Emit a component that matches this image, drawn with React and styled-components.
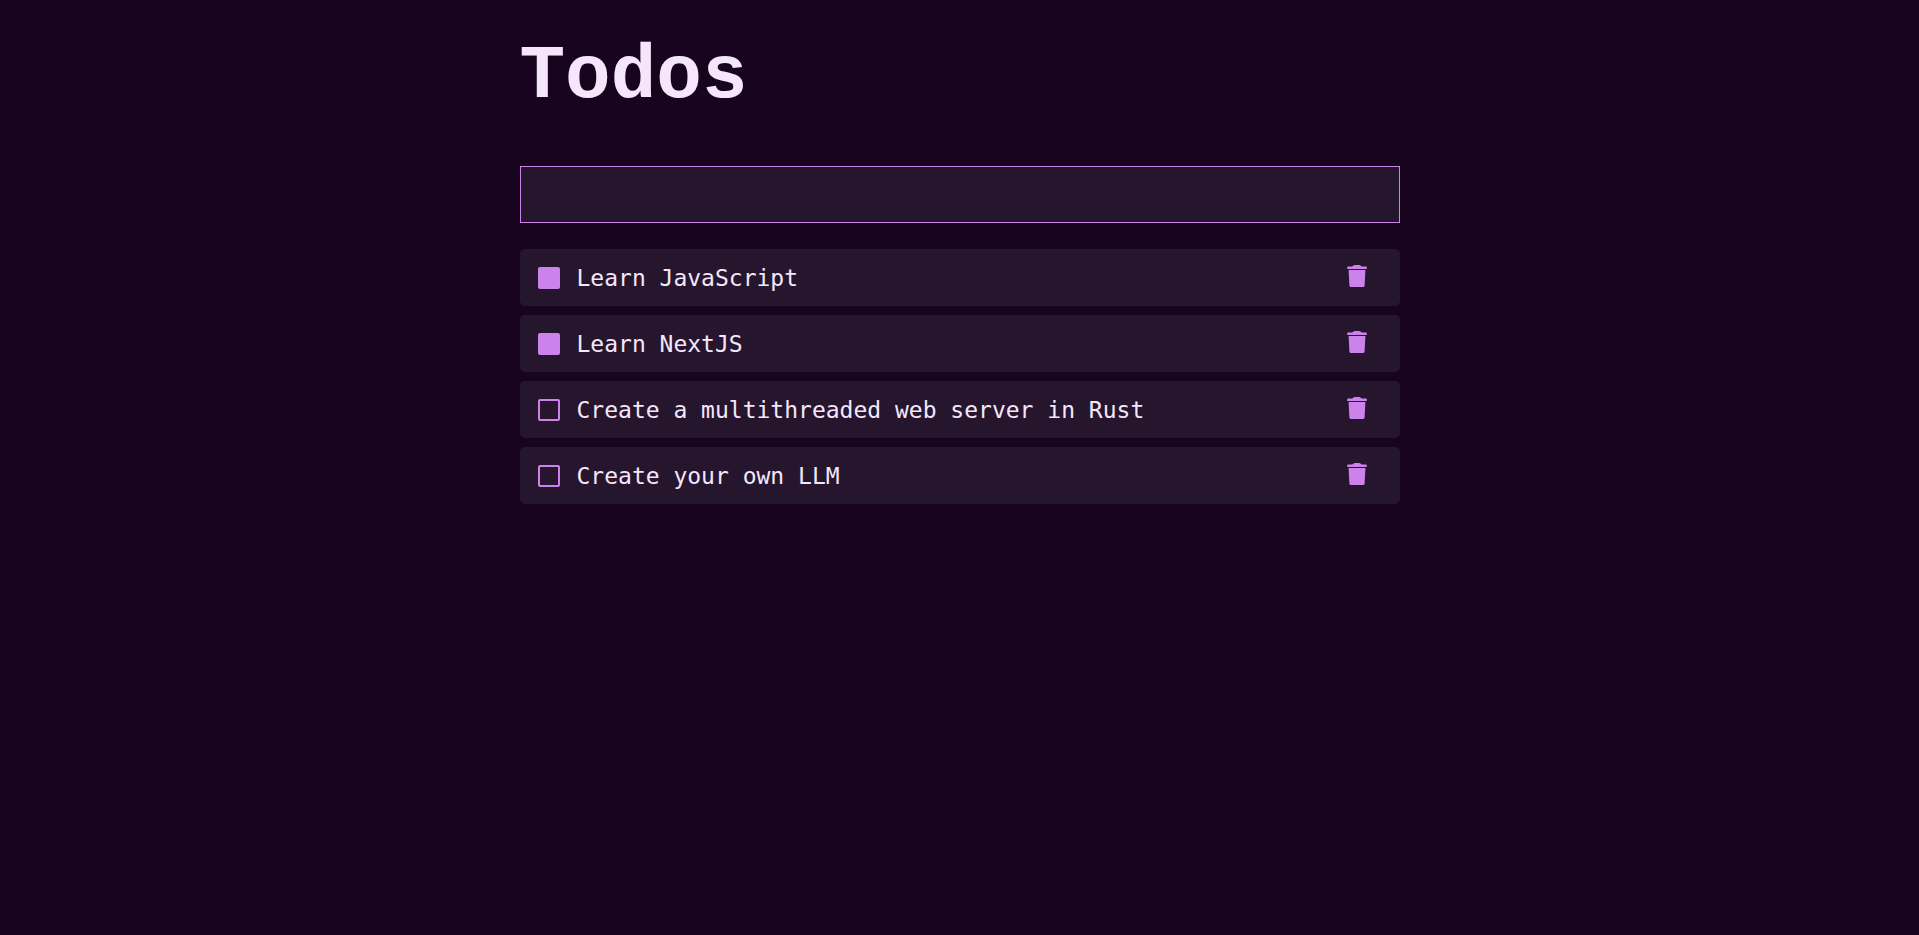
import { useState } from "react";
import styled, { createGlobalStyle } from "styled-components";

const GlobalStyle = createGlobalStyle`
  *, *::before, *::after { box-sizing: border-box; }
  body {
    margin: 0;
    background: #18041f;
    color: #f5e6fb;
    font-family: "DejaVu Sans Mono", monospace;
  }
`;

const Main = styled.main`
  width: 100%;
  max-width: 880px;
  margin: 0 auto;
  padding: 33px 0;
`;

const Title = styled.h1`
  margin: 0;
  font-family: "Liberation Mono", monospace;
  font-size: 76px;
  line-height: 88px;
  font-weight: 700;
`;

const NewTodo = styled.input`
  display: block;
  width: 100%;
  height: 57px;
  margin: 45px 0 26px;
  padding: 0 18px;
  border: 1px solid #cb83eb;
  border-radius: 0;
  outline: none;
  background: #26162d;
  color: inherit;
  font: inherit;
  font-size: 23px;
`;

const List = styled.ul`
  display: flex;
  flex-direction: column;
  gap: 9px;
  margin: 0;
  padding: 0;
  list-style: none;
`;

const Row = styled.li`
  display: flex;
  align-items: center;
  height: 57px;
  padding: 0 33px 0 18px;
  border-radius: 5px;
  background: #26162d;
`;

const Label = styled.label`
  display: flex;
  flex: 1;
  align-items: center;
  gap: 17px;
  font-size: 23px;
  line-height: 28px;
  cursor: pointer;
`;

const Check = styled.input`
  appearance: none;
  flex: none;
  width: 22px;
  height: 22px;
  margin: 0;
  border: 2px solid #cb83eb;
  border-radius: 2px;
  cursor: pointer;

  &:checked { background: #cb83eb; }
`;

const DeleteButton = styled.button`
  display: flex;
  padding: 0 0 4px;
  border: 0;
  background: none;
  color: #cb83eb;
  cursor: pointer;
`;

const TrashIcon = () => (
  <svg width="20" height="22" viewBox="0 0 20 22" fill="currentColor" aria-hidden="true">
    <path d="M5 1.500Q6.200 1.300 6.600.6 7 0 7.600 0h4.800q.6 0 1 .6.4.7 1.600.9h4q.8 0 .8.8v1.100q0 .6-.6.6H.8Q.2 4 .2 3.400V2.300q0-.8.8-.8Z" />
    <path d="M1.600 4.900h16.800l-.8 15.600Q17.500 22 16 22H4q-1.500 0-1.600-1.500Z" />
  </svg>
);

const initialTodos = [
  { id: 1, text: "Learn JavaScript", done: true },
  { id: 2, text: "Learn NextJS", done: true },
  { id: 3, text: "Create a multithreaded web server in Rust", done: false },
  { id: 4, text: "Create your own LLM", done: false },
];

export default function App() {
  const [todos, setTodos] = useState(initialTodos);
  const [draft, setDraft] = useState("");

  const toggle = (id) =>
    setTodos(todos.map((t) => (t.id === id ? { ...t, done: !t.done } : t)));
  const remove = (id) => setTodos(todos.filter((t) => t.id !== id));
  const add = (event) => {
    event.preventDefault();
    const text = draft.trim();
    if (!text) return;
    setTodos([...todos, { id: Date.now(), text, done: false }]);
    setDraft("");
  };

  return (
    <>
      <GlobalStyle />
      <Main>
        <Title>Todos</Title>
        <form onSubmit={add}>
          <NewTodo
            aria-label="New todo"
            value={draft}
            onChange={(event) => setDraft(event.target.value)}
          />
        </form>
        <List>
          {todos.map((todo) => (
            <Row key={todo.id}>
              <Label>
                <Check type="checkbox" checked={todo.done} onChange={() => toggle(todo.id)} />
                {todo.text}
              </Label>
              <DeleteButton type="button" aria-label={`Delete ${todo.text}`} onClick={() => remove(todo.id)}>
                <TrashIcon />
              </DeleteButton>
            </Row>
          ))}
        </List>
      </Main>
    </>
  );
}
